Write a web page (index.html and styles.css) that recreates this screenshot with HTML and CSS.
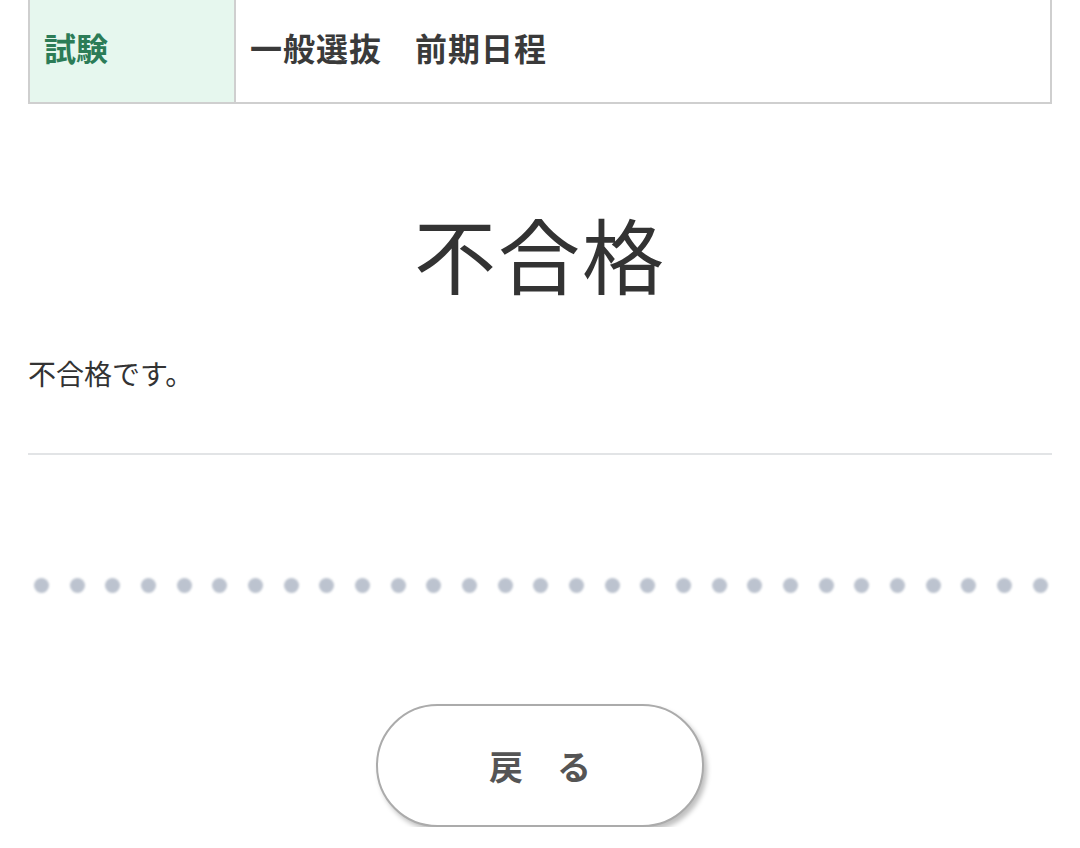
FILE: index.html
```html
<!DOCTYPE html>
<html lang="ja">
<head>
    <meta charset="UTF-8">
    <meta name="viewport" content="width=device-width, initial-scale=1.0">
    <title>合否結果</title>
    <link rel="stylesheet" href="styles.css">
</head>
<body>
    <div class="page">
        <table class="info-table">
            <tr>
                <th>試験</th>
                <td>一般選抜　前期日程</td>
            </tr>
        </table>

        <h1 class="result">不合格</h1>
        <p class="message">不合格です。</p>
        <hr class="divider">

        <div class="dots">
            <span></span><span></span><span></span><span></span><span></span>
            <span></span><span></span><span></span><span></span><span></span>
            <span></span><span></span><span></span><span></span><span></span>
            <span></span><span></span><span></span><span></span><span></span>
            <span></span><span></span><span></span><span></span><span></span>
            <span></span><span></span><span></span><span></span>
        </div>

        <div class="actions">
            <button type="button" class="back-btn">戻　る</button>
        </div>
    </div>
</body>
</html>
```

FILE: styles.css
```css
* {
    margin: 0;
    padding: 0;
    box-sizing: border-box;
}

body {
    background: #fff;
    color: #333;
    font-family: "Noto Sans CJK JP", "Noto Sans", sans-serif;
}

.page {
    padding: 0 28px;
}

.info-table {
    width: 100%;
    border-collapse: collapse;
    margin-top: -3px;
}

.info-table th,
.info-table td {
    border: 2px solid #cfcfcf;
    height: 105px;
    font-size: 32px;
    font-weight: bold;
    text-align: left;
    vertical-align: middle;
    padding: 0 14px 8px;
}

.info-table th {
    width: 206px;
    background: #e6f7ee;
    color: #2c7c57;
}

.info-table td {
    color: #3a3a3a;
    letter-spacing: 1px;
}

.result {
    text-align: center;
    font-size: 82px;
    font-weight: normal;
    color: #333;
    margin-top: 100px;
    line-height: 1.2;
    letter-spacing: 2px;
}

.message {
    font-size: 28px;
    margin-top: 52px;
    line-height: 1.4;
}

.divider {
    border: none;
    border-top: 2px solid #e2e4e6;
    margin-top: 59px;
}

.dots {
    display: flex;
    justify-content: space-between;
    padding: 0 4px 0 6px;
    margin-top: 123px;
}

.dots span {
    width: 15px;
    height: 15px;
    border-radius: 50%;
    background: #bcc3cf;
    filter: blur(0.8px);
}

.actions {
    display: flex;
    justify-content: center;
    margin-top: 111px;
}

.back-btn {
    width: 328px;
    height: 123px;
    border: 2px solid #ababab;
    border-radius: 62px;
    background: #fff;
    box-shadow: 3px 4px 5px rgba(0, 0, 0, 0.25);
    font-family: "Noto Sans CJK JP", sans-serif;
    font-size: 34px;
    font-weight: bold;
    color: #555;
    cursor: pointer;
}
```
